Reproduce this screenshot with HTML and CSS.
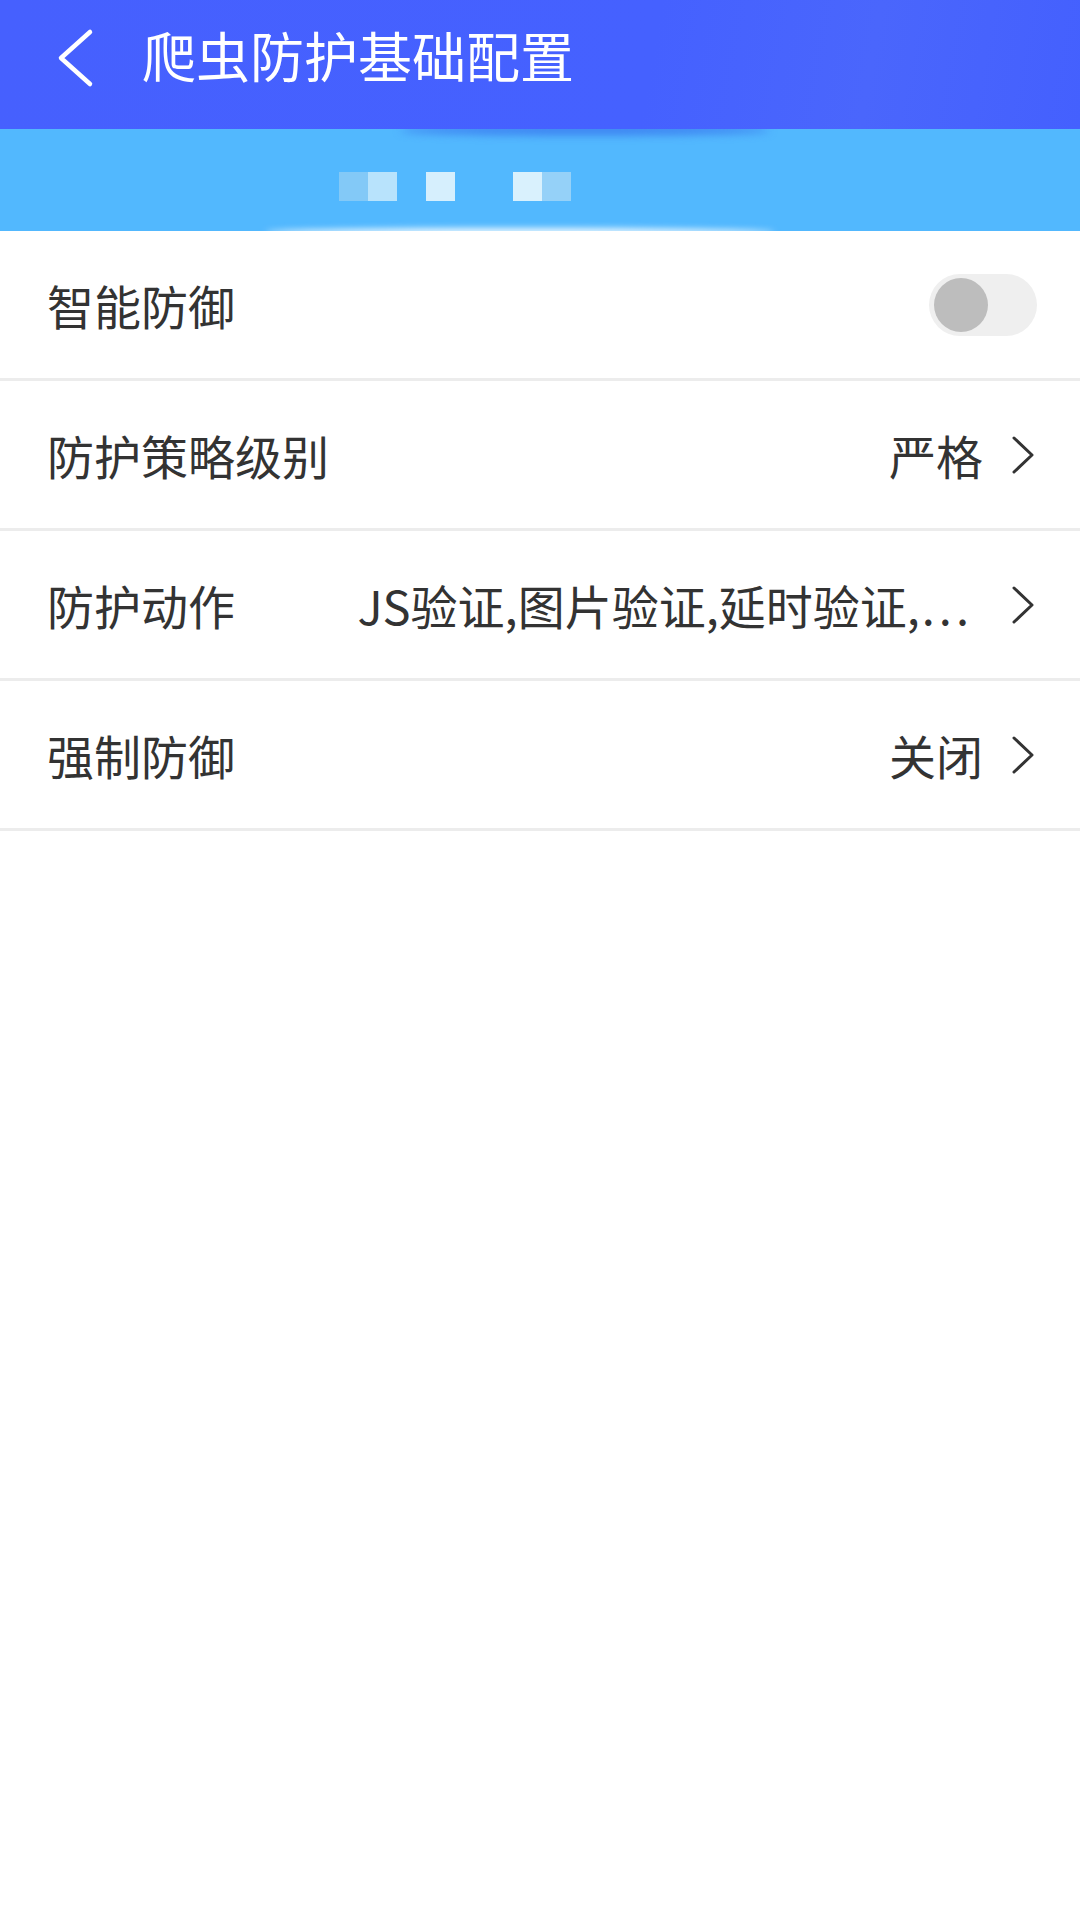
FILE: index.html
```html
<!DOCTYPE html>
<html lang="zh">
<head>
<meta charset="utf-8">
<link rel="stylesheet" href="styles.css">
</head>
<body>
<div class="page">
  <header class="topbar">
    <svg class="back" width="40" height="60" viewBox="0 0 40 60"><polyline points="35,4 6,30 35,56" fill="none" stroke="#fff" stroke-width="4.5" stroke-linecap="round" stroke-linejoin="round"/></svg>
    <h1 class="title">爬虫防护基础配置</h1>
  </header>
  <div class="banner">
    <div class="streak-top"></div>
    <div class="streak-bottom"></div>
    <div class="pix">
      <span class="sq s1"></span><span class="sq s2"></span><span class="gap"></span><span class="sq s3"></span><span class="gap2"></span><span class="sq s4"></span><span class="sq s5"></span>
    </div>
  </div>
  <ul class="list">
    <li class="row">
      <span class="label">智能防御</span>
      <span class="toggle"><span class="knob"></span></span>
    </li>
    <li class="row">
      <span class="label">防护策略级别</span>
      <span class="value">严格</span>
      <svg class="chev" width="26" height="40" viewBox="0 0 26 40"><polyline points="4,3 22,20 4,37" fill="none" stroke="#333" stroke-width="3" stroke-linecap="round" stroke-linejoin="round"/></svg>
    </li>
    <li class="row">
      <span class="label">防护动作</span>
      <span class="value">JS验证,图片验证,延时验证,<span class="dots">...</span></span>
      <svg class="chev" width="26" height="40" viewBox="0 0 26 40"><polyline points="4,3 22,20 4,37" fill="none" stroke="#333" stroke-width="3" stroke-linecap="round" stroke-linejoin="round"/></svg>
    </li>
    <li class="row">
      <span class="label">强制防御</span>
      <span class="value">关闭</span>
      <svg class="chev" width="26" height="40" viewBox="0 0 26 40"><polyline points="4,3 22,20 4,37" fill="none" stroke="#333" stroke-width="3" stroke-linecap="round" stroke-linejoin="round"/></svg>
    </li>
  </ul>
</div>
</body>
</html>
```

FILE: styles.css
```css
* { box-sizing: border-box; }
html, body { margin: 0; padding: 0; background: #fff; }
body {
  width: 1080px;
  height: 1920px;
  font-family: "Noto Sans CJK SC", "Noto Sans", sans-serif;
  color: #333;
}
.page { width: 1080px; }
.topbar {
  height: 129px;
  background: linear-gradient(100deg, #4660fe 0%, #4561ff 60%, #4a66fc 80%, #4460fe 100%);
  display: flex;
  align-items: center;
  padding-left: 55px;
  padding-bottom: 20px;
}
.back { display: block; flex: none; margin-top: 6px; }
.title {
  margin: 0 0 0 47px;
  font-size: 54px;
  font-weight: 400;
  color: #fff;
  line-height: 1;
}
.banner {
  position: relative;
  height: 102px;
  background: #52b8fe;
  overflow: hidden;
  display: flex;
  align-items: center;
}
.streak-top {
  position: absolute;
  left: 400px;
  top: -4px;
  width: 370px;
  height: 10px;
  border-radius: 50%;
  background: #3c7ff0;
  filter: blur(4px);
}
.streak-bottom {
  position: absolute;
  left: 265px;
  bottom: -5px;
  width: 510px;
  height: 8px;
  border-radius: 50%;
  background: #e8f6ff;
  filter: blur(3px);
}
.pix {
  display: flex;
  margin-left: 339px;
  margin-top: 12px;
}
.sq { display: block; width: 29px; height: 29px; }
.gap { width: 29px; }
.gap2 { width: 58px; }
.s1 { background: #83c9f7; }
.s2 { background: #b8e3fc; }
.s3 { background: #d6effd; }
.s4 { background: #d9f1fd; }
.s5 { background: #95d1f8; }
.list {
  list-style: none;
  margin: 0;
  padding: 0;
}
.row {
  height: 150px;
  border-bottom: 3px solid #ececec;
  display: flex;
  align-items: center;
  padding: 0 44px 0 47px;
}
.label {
  font-size: 47px;
  line-height: 1;
  flex: 1;
  color: #333;
}
.value {
  font-size: 47px;
  line-height: 1;
  color: #333;
  margin-right: 27px;
  white-space: nowrap;
}
.dots {
  letter-spacing: 4px;
  margin-left: 2px;
  margin-right: 10px;
}
.chev { display: block; flex: none; }
.toggle {
  position: relative;
  width: 108px;
  height: 62px;
  border-radius: 31px;
  background: #efefef;
  margin-right: -1px;
}
.knob {
  position: absolute;
  left: 5px;
  top: 4px;
  width: 54px;
  height: 54px;
  border-radius: 50%;
  background: #bdbdbd;
}
```
